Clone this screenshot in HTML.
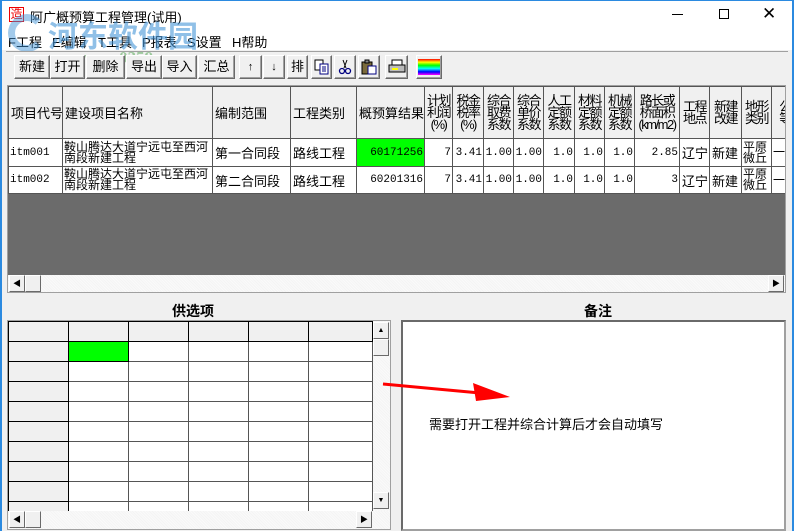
<!DOCTYPE html>
<html><head><meta charset="utf-8">
<style>
*{margin:0;padding:0;box-sizing:border-box}
body{width:794px;height:531px;background:#f0f0f0;position:relative;overflow:hidden;font-family:"Liberation Sans","Noto Sans CJK SC","WenQuanYi Zen Hei",sans-serif;font-size:12px;color:#000}
.a{position:absolute}
.btn{position:absolute;top:55px;height:24px;background:#f0f0f0;border:1px solid;border-color:#fff #6a6a6a #6a6a6a #fff;box-shadow:inset -1px -1px 0 #a0a0a0;text-align:center;line-height:22px;font-size:13px}
table{border-collapse:collapse;table-layout:fixed}
#t1 td{border:1px solid #555;font-size:12px;overflow:hidden;white-space:nowrap;padding:0 2px;background:#fff}
#t1 tr.h td{background:#f0f0f0;height:52px;font-size:12px}
.m{white-space:normal!important;line-height:12px;text-align:center;font-size:13px!important;letter-spacing:-1.5px;padding:0!important}
.r{text-align:right}
.mono{font-family:"Liberation Mono",monospace;font-size:11px!important;padding:0 1px!important}
.two{white-space:normal!important;line-height:11px;font-size:13px;padding:0 1px!important}
#t2 td{border:1px solid #555;height:20px;background:#fff}
#t2 td.hd{background:#f0f0f0;border-color:#000}
.sb{position:absolute;background:#f0f0f0;border:1px solid;border-color:#fff #6a6a6a #6a6a6a #fff}
.dither{background:repeating-linear-gradient(45deg,#f4f4f4 0 1px,#fafafa 1px 2px)}
</style></head><body>
<div class="a" style="left:0;top:0;width:2px;height:531px;background:#2b8ae0"></div>
<div class="a" style="right:0;top:0;width:2px;height:531px;background:#2b8ae0"></div>
<div class="a" style="left:2px;top:0;width:790px;height:50px;background:#fff"></div>
<div class="a" style="left:0;top:0;width:794px;height:1px;background:#2b8ae0"></div>
<div class="a" style="left:9px;top:7px;width:15px;height:15px;border:1px solid #e00;color:#e00;font-size:12px;line-height:13px;text-align:center">造</div>
<div class="a" style="left:30px;top:7px;font-size:13px">阿广概预算工程管理(试用)</div>
<div class="a" style="left:672px;top:14px;width:11px;height:1px;background:#000"></div>
<div class="a" style="left:719px;top:9px;width:10px;height:10px;border:1px solid #000"></div>
<div class="a" style="left:762px;top:4px;font-size:17px;font-weight:100">✕</div>
<div class="a" style="left:8px;top:32px;font-size:13px">F工程</div>
<div class="a" style="left:52px;top:32px;font-size:13px">E编辑</div>
<div class="a" style="left:98px;top:32px;font-size:13px">T工具</div>
<div class="a" style="left:142px;top:32px;font-size:13px">P报表</div>
<div class="a" style="left:187px;top:32px;font-size:13px">S设置</div>
<div class="a" style="left:232px;top:32px;font-size:13px">H帮助</div>
<div class="a" style="left:48px;top:12px;font-size:30px;font-weight:bold;color:rgba(70,150,215,.6)">河东软件园</div>
<div class="a" style="left:62px;top:48px;font-size:17px;font-weight:bold;font-family:'Liberation Serif',serif;color:rgba(90,170,90,.55)">www.pc0359.cn</div>
<div class="a" style="left:8px;top:14px;width:38px;height:38px;border-radius:50%;border:7px solid rgba(70,150,215,.5);border-right-color:transparent"></div>
<div class="a" style="left:6px;top:51px;width:782px;height:1px;background:#a0a0a0"></div>
<div class="btn" style="left:14px;width:36px">新建</div>
<div class="btn" style="left:50px;width:35px">打开</div>
<div class="btn" style="left:86px;width:39px">删除</div>
<div class="btn" style="left:126px;width:36px">导出</div>
<div class="btn" style="left:162px;width:35px">导入</div>
<div class="btn" style="left:198px;width:37px">汇总</div>
<div class="btn" style="left:239px;width:23px;font-size:11px">↑</div>
<div class="btn" style="left:263px;width:22px;font-size:11px">↓</div>
<div class="btn" style="left:287px;width:21px">排</div>
<div class="btn" style="left:311px;width:21px"><svg width="16" height="16" style="margin-top:3px"><rect x="1" y="1" width="8" height="10" fill="#fff" stroke="#000"/><rect x="6" y="5" width="8" height="10" fill="#fff" stroke="#000080"/><path d="M8 8h4M8 10h4M8 12h4" stroke="#000080"/></svg></div>
<div class="btn" style="left:334px;width:22px"><svg width="14" height="16" style="margin-top:3px"><path d="M5 1L8 9M9 1L6 9" stroke="#000" fill="none"/><circle cx="4" cy="12" r="2.5" fill="none" stroke="#000080" stroke-width="1.3"/><circle cx="10" cy="12" r="2.5" fill="none" stroke="#000080" stroke-width="1.3"/></svg></div>
<div class="btn" style="left:358px;width:22px"><svg width="16" height="16" style="margin-top:3px"><rect x="1" y="3" width="10" height="12" fill="#7a6a3a" stroke="#000"/><rect x="4" y="1" width="4" height="3" fill="#888" stroke="#000"/><rect x="7" y="7" width="8" height="8" fill="#fff" stroke="#000080"/></svg></div>
<div class="btn" style="left:385px;width:23px"><svg width="18" height="16" style="margin-top:3px"><rect x="4" y="1" width="10" height="5" fill="#fff" stroke="#000"/><rect x="1" y="6" width="16" height="7" fill="#bbb" stroke="#000"/><rect x="4" y="9" width="6" height="2" fill="#ff0"/></svg></div>
<div class="btn" style="left:416px;width:26px"><div style="margin:3px auto;width:22px;height:16px;background:linear-gradient(to bottom,#f00,#ff0,#0f0,#0ff,#00f,#f0f)"></div></div>
<div class="a" style="left:7px;top:85px;width:779px;height:208px;border:1px solid #a0a0a0;background:#6b6b6b;overflow:hidden">
<table id="t1" style="width:790px">
<colgroup><col style="width:54px"><col style="width:150px"><col style="width:78px"><col style="width:66px"><col style="width:68px"><col style="width:28px"><col style="width:31px"><col style="width:30px"><col style="width:30px"><col style="width:31px"><col style="width:30px"><col style="width:30px"><col style="width:45px"><col style="width:30px"><col style="width:32px"><col style="width:30px"><col style="width:27px"></colgroup>
<tr class="h"><td style="font-size:13px">项目代号</td><td style="font-size:13px">建设项目名称</td><td style="font-size:13px">编制范围</td><td style="font-size:13px">工程类别</td><td style="font-size:13px">概预算结果</td>
<td class="m">计划<br>利润<br>(%)</td><td class="m">税金<br>税率<br>(%)</td><td class="m">综合<br>取费<br>系数</td><td class="m">综合<br>单价<br>系数</td><td class="m">人工<br>定额<br>系数</td><td class="m">材料<br>定额<br>系数</td><td class="m">机械<br>定额<br>系数</td><td class="m">路长或<br>桥面积<br>(km/m2)</td><td class="m">工程<br>地点</td><td class="m">新建<br>改建</td><td class="m">地形<br>类别</td><td class="m">公<br>等</td></tr>
<tr style="height:28px"><td class="mono">itm001</td><td class="two">鞍山腾达大道宁远屯至西河南段新建工程</td><td style="font-size:13px">第一合同段</td><td style="font-size:13px">路线工程</td><td class="r mono" style="background:#00ff00">60171256</td><td class="r mono">7</td><td class="r mono">3.41</td><td class="r mono">1.00</td><td class="r mono">1.00</td><td class="r mono">1.0</td><td class="r mono">1.0</td><td class="r mono">1.0</td><td class="r mono">2.85</td><td style="font-size:13px">辽宁</td><td style="font-size:13px">新建</td><td class="two" style="font-size:12px">平原微丘</td><td class="two">一公</td></tr>
<tr style="height:27px"><td class="mono">itm002</td><td class="two">鞍山腾达大道宁远屯至西河南段新建工程</td><td style="font-size:13px">第二合同段</td><td style="font-size:13px">路线工程</td><td class="r mono">60201316</td><td class="r mono">7</td><td class="r mono">3.41</td><td class="r mono">1.00</td><td class="r mono">1.00</td><td class="r mono">1.0</td><td class="r mono">1.0</td><td class="r mono">1.0</td><td class="r mono">3</td><td style="font-size:13px">辽宁</td><td style="font-size:13px">新建</td><td class="two" style="font-size:12px">平原微丘</td><td class="two">一公</td></tr>
</table>
<div class="a dither" style="left:0;top:189px;width:777px;height:17px"></div>
<div class="sb" style="left:1px;top:189px;width:16px;height:17px;font-size:8px;line-height:15px;text-align:center">◀</div>
<div class="sb" style="left:17px;top:189px;width:16px;height:17px"></div>
<div class="sb" style="left:760px;top:189px;width:16px;height:17px;font-size:8px;line-height:15px;text-align:center">▶</div>
</div>
<div class="a" style="left:172px;top:301px;font-size:14px;font-weight:bold">供选项</div>
<div class="a" style="left:584px;top:301px;font-size:14px;font-weight:bold">备注</div>
<div class="a" style="left:7px;top:320px;width:384px;height:210px;border:1px solid #a0a0a0;overflow:hidden;background:#fff">
<table id="t2" style="width:364px;margin:0">
<colgroup><col style="width:60px"><col style="width:60px"><col style="width:60px"><col style="width:60px"><col style="width:60px"><col style="width:64px"></colgroup>
<tr><td class="hd"></td><td class="hd"></td><td class="hd"></td><td class="hd"></td><td class="hd"></td><td class="hd"></td></tr>
<tr><td class="hd"></td><td style="background:#00ff00;border-color:#000"></td><td></td><td></td><td></td><td></td></tr>
<tr><td class="hd"></td><td></td><td></td><td></td><td></td><td></td></tr>
<tr><td class="hd"></td><td></td><td></td><td></td><td></td><td></td></tr>
<tr><td class="hd"></td><td></td><td></td><td></td><td></td><td></td></tr>
<tr><td class="hd"></td><td></td><td></td><td></td><td></td><td></td></tr>
<tr><td class="hd"></td><td></td><td></td><td></td><td></td><td></td></tr>
<tr><td class="hd"></td><td></td><td></td><td></td><td></td><td></td></tr>
<tr><td class="hd"></td><td></td><td></td><td></td><td></td><td></td></tr>
<tr><td class="hd"></td><td></td><td></td><td></td><td></td><td></td></tr>
</table>
<div class="a dither" style="left:365px;top:0;width:17px;height:190px"></div>
<div class="sb" style="left:365px;top:1px;width:16px;height:17px;font-size:7px;line-height:15px;text-align:center">▲</div>
<div class="sb" style="left:365px;top:18px;width:16px;height:17px"></div>
<div class="sb" style="left:365px;top:171px;width:16px;height:17px;font-size:7px;line-height:15px;text-align:center">▼</div>
<div class="a dither" style="left:0;top:190px;width:382px;height:18px"></div>
<div class="sb" style="left:1px;top:190px;width:16px;height:17px;font-size:8px;line-height:15px;text-align:center">◀</div>
<div class="sb" style="left:17px;top:190px;width:16px;height:17px"></div>
<div class="sb" style="left:348px;top:190px;width:16px;height:17px;font-size:8px;line-height:15px;text-align:center">▶</div>
</div>
<div class="a" style="left:401px;top:320px;width:385px;height:211px;border:2px solid;border-color:#6a6a6a #a0a0a0 #a0a0a0 #6a6a6a;background:#fff"></div>
<div class="a" style="left:429px;top:414px;font-size:13px">需要打开工程并综合计算后才会自动填写</div>
<svg class="a" style="left:380px;top:380px" width="140" height="30"><path d="M3 4L100 13" stroke="#f00" stroke-width="3"/><path d="M93 3L130 17L96 21Z" fill="#f00"/></svg>
</body></html>
